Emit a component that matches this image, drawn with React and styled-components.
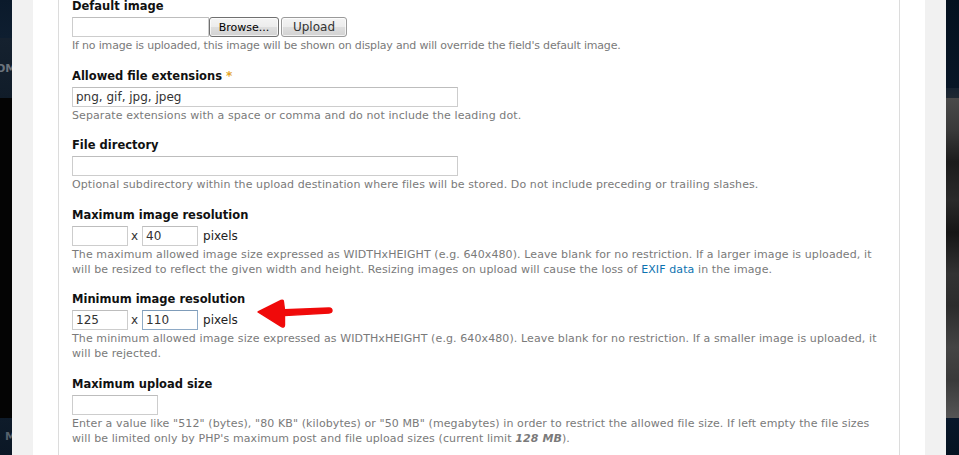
import React from "react";
import styled, { createGlobalStyle } from "styled-components";

const Global = createGlobalStyle`
  html, body { margin: 0; padding: 0; background: #fff; }
  body { overflow: hidden; font-family: "DejaVu Sans", Verdana, sans-serif; }
`;

const Page = styled.div`
  display: flex;
  height: 455px;
  width: 959px;
  overflow: hidden;
`;

const SideStrip = styled.div`
  width: ${(p) => p.$w}px;
  flex: none;
  display: flex;
  flex-direction: column;
  overflow: hidden;
`;

const Band = styled.div`
  height: ${(p) => p.$h}px;
  flex: ${(p) => (p.$grow ? "1" : "none")};
  background: ${(p) => p.$bg};
  display: flex;
  align-items: center;
  overflow: hidden;
  white-space: nowrap;
  font: bold 11px "DejaVu Sans", sans-serif;
  color: ${(p) => p.$color || "#6f7780"};
`;

const BandText = styled.span`
  margin-left: ${(p) => p.$offset}px;
`;

const Gutter = styled.div`
  width: 21px;
  flex: none;
  background: #f1f1f1;
`;

const Sheet = styled.div`
  flex: 1;
  background: #fff;
  padding: 0 25px;
  display: flex;
`;

const Fieldset = styled.div`
  flex: 1;
  border-left: 1px solid #dcdcdc;
  border-right: 1px solid #dcdcdc;
  padding: 0 13px;
`;

const Form = styled.div`
  margin-top: -2px;
`;

const Field = styled.div`
  margin-bottom: 14.5px;
`;

const Label = styled.div`
  font: bold 11.5px/17px "DejaVu Sans", Verdana, sans-serif;
  color: #111;
  margin-bottom: 2px;
`;

const Required = styled.span`
  color: #e4a326;
  font-weight: bold;
  font-size: 12px;
  margin-left: 4px;
`;

const Row = styled.div`
  position: relative;
  display: flex;
  align-items: center;
  height: 20px;
`;

const TextInput = styled.div`
  box-sizing: border-box;
  width: ${(p) => p.$w}px;
  height: 20px;
  border: 1px solid ${(p) => (p.$focused ? "#8eaac6" : "#cdcdcd")};
  border-top-color: ${(p) => (p.$focused ? "#7f9cb9" : "#bdbdbd")};
  background: #fff;
  padding: 0 3px;
  font: 12px/18px "DejaVu Sans", Verdana, sans-serif;
  color: #333;
  white-space: nowrap;
  overflow: hidden;
`;

const Button = styled.div`
  box-sizing: border-box;
  width: ${(p) => p.$w}px;
  height: 20px;
  margin-left: ${(p) => p.$ml}px;
  border: 1px solid ${(p) => p.$border};
  border-radius: 3px;
  background: linear-gradient(#f4f4f4 0%, #ececec 50%, #dedede 51%, #d2d2d2 100%);
  box-shadow: inset 0 0 0 1px rgba(255, 255, 255, 0.7);
  display: flex;
  align-items: center;
  justify-content: center;
  font: ${(p) => p.$fs}px "DejaVu Sans", Verdana, sans-serif;
  color: ${(p) => p.$color};
`;

const Times = styled.span`
  font: 12px "DejaVu Sans", Verdana, sans-serif;
  color: #333;
  margin: 0 4px 0 3px;
`;

const Unit = styled.span`
  font: 12px "DejaVu Sans", Verdana, sans-serif;
  color: #222;
  margin-left: 5px;
`;

const Description = styled.div`
  margin-top: 1px;
  font: 11px/15px "DejaVu Sans", Verdana, sans-serif;
  letter-spacing: ${(p) => (p.$tight ? "-0.18px" : "0.1px")};
  color: #7a7a7a;
`;

const Line = styled.div`
  white-space: nowrap;
`;

const Link = styled.a`
  color: #0d72b0;
  text-decoration: none;
`;

const Strong = styled.em`
  font-weight: bold;
  font-style: italic;
`;

const ArrowMark = styled.svg`
  position: absolute;
  left: 183px;
  top: -13px;
  width: 80px;
  height: 34px;
  overflow: visible;
`;

function Arrow() {
  return (
    <ArrowMark viewBox="0 0 80 34">
      <path
        d="M3 15 L26 3.5 Q28.5 2.5 28.5 5 L29.5 12.8 L74 11 Q77 11.3 77 13.6 Q77 15.8 74 16 L29.5 18.6 L29.5 28 Q29.5 31 26.5 29.6 Z"
        fill="#f00a0a"
        stroke="#f00a0a"
        strokeWidth="1.4"
        strokeLinejoin="round"
      />
    </ArrowMark>
  );
}

export default function App() {
  return (
    <>
      <Global />
      <Page>
        <SideStrip $w={12}>
          <Band $h={38} $bg="linear-gradient(#0b1a2b, #0e1e30)" />
          <Band $h={60} $bg="linear-gradient(#15212f, #101c29)" $color="#6c747d">
            <BandText $offset={-4}>OM</BandText>
          </Band>
          <Band $grow $bg="#040404" />
          <Band $h={37} $bg="linear-gradient(#0e1b2a, #0b1725)" $color="#56616d">
            <BandText $offset={5}>M</BandText>
          </Band>
        </SideStrip>
        <Gutter />
        <Sheet>
          <Fieldset>
            <Form>
              <Field>
                <Label>Default image</Label>
                <Row>
                  <TextInput $w={137} />
                  <Button $w={70} $ml={0} $border="#707070" $fs={11} $color="#000">
                    Browse...
                  </Button>
                  <Button $w={66} $ml={2} $border="#9a9a9a" $fs={12} $color="#333">
                    Upload
                  </Button>
                </Row>
                <Description $tight>
                  <Line>
                    If no image is uploaded, this image will be shown on display and will override the field's default image.
                  </Line>
                </Description>
              </Field>

              <Field>
                <Label>
                  Allowed file extensions<Required>*</Required>
                </Label>
                <Row>
                  <TextInput $w={386}>png, gif, jpg, jpeg</TextInput>
                </Row>
                <Description>
                  <Line>Separate extensions with a space or comma and do not include the leading dot.</Line>
                </Description>
              </Field>

              <Field>
                <Label>File directory</Label>
                <Row>
                  <TextInput $w={386} />
                </Row>
                <Description>
                  <Line>
                    Optional subdirectory within the upload destination where files will be stored. Do not include preceding or trailing slashes.
                  </Line>
                </Description>
              </Field>

              <Field>
                <Label>Maximum image resolution</Label>
                <Row>
                  <TextInput $w={56} />
                  <Times>x</Times>
                  <TextInput $w={56}>40</TextInput>
                  <Unit>pixels</Unit>
                </Row>
                <Description>
                  <Line>
                    The maximum allowed image size expressed as WIDTHxHEIGHT (e.g. 640x480). Leave blank for no restriction. If a larger image is uploaded, it
                  </Line>
                  <Line>
                    will be resized to reflect the given width and height. Resizing images on upload will cause the loss of{" "}
                    <Link href="#">EXIF data</Link> in the image.
                  </Line>
                </Description>
              </Field>

              <Field>
                <Label>Minimum image resolution</Label>
                <Row>
                  <TextInput $w={56}>125</TextInput>
                  <Times>x</Times>
                  <TextInput $w={56} $focused>
                    110
                  </TextInput>
                  <Unit>pixels</Unit>
                  <Arrow />
                </Row>
                <Description>
                  <Line>
                    The minimum allowed image size expressed as WIDTHxHEIGHT (e.g. 640x480). Leave blank for no restriction. If a smaller image is uploaded, it
                  </Line>
                  <Line>will be rejected.</Line>
                </Description>
              </Field>

              <Field>
                <Label>Maximum upload size</Label>
                <Row>
                  <TextInput $w={86} />
                </Row>
                <Description>
                  <Line>
                    Enter a value like "512" (bytes), "80 KB" (kilobytes) or "50 MB" (megabytes) in order to restrict the allowed file size. If left empty the file sizes
                  </Line>
                  <Line>
                    will be limited only by PHP's maximum post and file upload sizes (current limit <Strong>128 MB</Strong>).
                  </Line>
                </Description>
              </Field>
            </Form>
          </Fieldset>
        </Sheet>
        <Gutter />
        <SideStrip $w={13}>
          <Band $h={88} $bg="linear-gradient(#04111f, #081626)" />
          <Band $h={10} $bg="linear-gradient(#162230, #1e2832)" />
          <Band
            $grow
            $bg="linear-gradient(#4a4a4a 0%, #3a3a3a 10%, #1c1c1c 20%, #2a2a2a 32%, #161616 42%, #333 55%, #2c2c2c 65%, #444 78%, #3a3a3a 88%, #555 100%)"
          />
          <Band $h={37} $bg="linear-gradient(#08172a, #051321)" />
        </SideStrip>
      </Page>
    </>
  );
}
